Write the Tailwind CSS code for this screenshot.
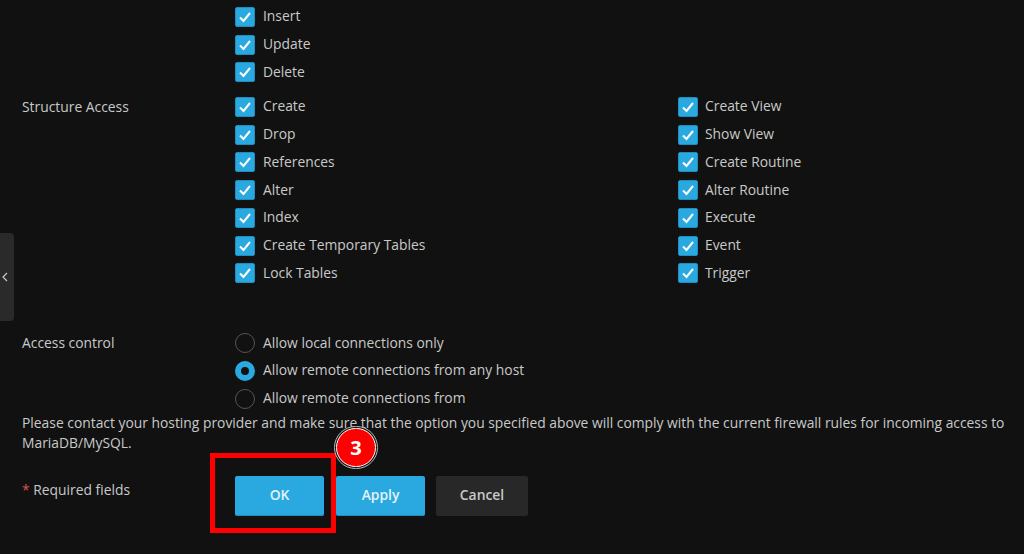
<!DOCTYPE html>
<html lang="en">
<head>
    <meta charset="UTF-8">
    <title>Database user access</title>
    <script src="https://cdn.jsdelivr.net/npm/@tailwindcss/browser@4"></script>
</head>
<body class="bg-[#111111] h-[554px] w-[1024px] overflow-hidden relative font-['Open_Sans',sans-serif] text-[13.85px] text-[#c9c9c9]">

    <!-- sidebar toggle -->
    <div class="absolute left-0 top-[233px] w-[14px] h-[88px] bg-[#2a2a2a] rounded-r flex items-center pl-[2px]">
        <svg width="6" height="10" viewBox="0 0 6 10" fill="none" stroke="#c8c8c8" stroke-width="1.2"><path d="M5 1 1 5l4 4"/></svg>
    </div>

    <main class="pl-[22px] pt-[3px]">
        <!-- data access, end of the list -->
        <div class="pl-[213px] flex flex-col">
            <label class="h-[27.75px] flex items-center gap-2"><span class="w-5 h-5 rounded-[2px] bg-[#29a9e0] border border-[#1f8dbd] flex items-center justify-center"><svg width="14" height="14" viewBox="0 0 14 14" fill="none" stroke="#fff" stroke-width="2"><path d="M2 7.5 5.5 11 12 3"/></svg></span>Insert</label>
            <label class="h-[27.75px] flex items-center gap-2"><span class="w-5 h-5 rounded-[2px] bg-[#29a9e0] border border-[#1f8dbd] flex items-center justify-center"><svg width="14" height="14" viewBox="0 0 14 14" fill="none" stroke="#fff" stroke-width="2"><path d="M2 7.5 5.5 11 12 3"/></svg></span>Update</label>
            <label class="h-[27.75px] flex items-center gap-2"><span class="w-5 h-5 rounded-[2px] bg-[#29a9e0] border border-[#1f8dbd] flex items-center justify-center"><svg width="14" height="14" viewBox="0 0 14 14" fill="none" stroke="#fff" stroke-width="2"><path d="M2 7.5 5.5 11 12 3"/></svg></span>Delete</label>
        </div>

        <!-- structure access -->
        <div class="flex mt-[6.75px]">
            <div class="w-[213px] h-[29px] flex items-center">Structure Access</div>
            <div class="w-[443px] flex flex-col">
                <label class="h-[27.75px] flex items-center gap-2"><span class="w-5 h-5 rounded-[2px] bg-[#29a9e0] border border-[#1f8dbd] flex items-center justify-center"><svg width="14" height="14" viewBox="0 0 14 14" fill="none" stroke="#fff" stroke-width="2"><path d="M2 7.5 5.5 11 12 3"/></svg></span>Create</label>
                <label class="h-[27.75px] flex items-center gap-2"><span class="w-5 h-5 rounded-[2px] bg-[#29a9e0] border border-[#1f8dbd] flex items-center justify-center"><svg width="14" height="14" viewBox="0 0 14 14" fill="none" stroke="#fff" stroke-width="2"><path d="M2 7.5 5.5 11 12 3"/></svg></span>Drop</label>
                <label class="h-[27.75px] flex items-center gap-2"><span class="w-5 h-5 rounded-[2px] bg-[#29a9e0] border border-[#1f8dbd] flex items-center justify-center"><svg width="14" height="14" viewBox="0 0 14 14" fill="none" stroke="#fff" stroke-width="2"><path d="M2 7.5 5.5 11 12 3"/></svg></span>References</label>
                <label class="h-[27.75px] flex items-center gap-2"><span class="w-5 h-5 rounded-[2px] bg-[#29a9e0] border border-[#1f8dbd] flex items-center justify-center"><svg width="14" height="14" viewBox="0 0 14 14" fill="none" stroke="#fff" stroke-width="2"><path d="M2 7.5 5.5 11 12 3"/></svg></span>Alter</label>
                <label class="h-[27.75px] flex items-center gap-2"><span class="w-5 h-5 rounded-[2px] bg-[#29a9e0] border border-[#1f8dbd] flex items-center justify-center"><svg width="14" height="14" viewBox="0 0 14 14" fill="none" stroke="#fff" stroke-width="2"><path d="M2 7.5 5.5 11 12 3"/></svg></span>Index</label>
                <label class="h-[27.75px] flex items-center gap-2"><span class="w-5 h-5 rounded-[2px] bg-[#29a9e0] border border-[#1f8dbd] flex items-center justify-center"><svg width="14" height="14" viewBox="0 0 14 14" fill="none" stroke="#fff" stroke-width="2"><path d="M2 7.5 5.5 11 12 3"/></svg></span>Create Temporary Tables</label>
                <label class="h-[27.75px] flex items-center gap-2"><span class="w-5 h-5 rounded-[2px] bg-[#29a9e0] border border-[#1f8dbd] flex items-center justify-center"><svg width="14" height="14" viewBox="0 0 14 14" fill="none" stroke="#fff" stroke-width="2"><path d="M2 7.5 5.5 11 12 3"/></svg></span>Lock Tables</label>
            </div>
            <div class="flex flex-col">
                <label class="h-[27.75px] flex items-center gap-[7px]"><span class="w-5 h-5 rounded-[2px] bg-[#29a9e0] border border-[#1f8dbd] flex items-center justify-center"><svg width="14" height="14" viewBox="0 0 14 14" fill="none" stroke="#fff" stroke-width="2"><path d="M2 7.5 5.5 11 12 3"/></svg></span>Create View</label>
                <label class="h-[27.75px] flex items-center gap-[7px]"><span class="w-5 h-5 rounded-[2px] bg-[#29a9e0] border border-[#1f8dbd] flex items-center justify-center"><svg width="14" height="14" viewBox="0 0 14 14" fill="none" stroke="#fff" stroke-width="2"><path d="M2 7.5 5.5 11 12 3"/></svg></span>Show View</label>
                <label class="h-[27.75px] flex items-center gap-[7px]"><span class="w-5 h-5 rounded-[2px] bg-[#29a9e0] border border-[#1f8dbd] flex items-center justify-center"><svg width="14" height="14" viewBox="0 0 14 14" fill="none" stroke="#fff" stroke-width="2"><path d="M2 7.5 5.5 11 12 3"/></svg></span>Create Routine</label>
                <label class="h-[27.75px] flex items-center gap-[7px]"><span class="w-5 h-5 rounded-[2px] bg-[#29a9e0] border border-[#1f8dbd] flex items-center justify-center"><svg width="14" height="14" viewBox="0 0 14 14" fill="none" stroke="#fff" stroke-width="2"><path d="M2 7.5 5.5 11 12 3"/></svg></span>Alter Routine</label>
                <label class="h-[27.75px] flex items-center gap-[7px]"><span class="w-5 h-5 rounded-[2px] bg-[#29a9e0] border border-[#1f8dbd] flex items-center justify-center"><svg width="14" height="14" viewBox="0 0 14 14" fill="none" stroke="#fff" stroke-width="2"><path d="M2 7.5 5.5 11 12 3"/></svg></span>Execute</label>
                <label class="h-[27.75px] flex items-center gap-[7px]"><span class="w-5 h-5 rounded-[2px] bg-[#29a9e0] border border-[#1f8dbd] flex items-center justify-center"><svg width="14" height="14" viewBox="0 0 14 14" fill="none" stroke="#fff" stroke-width="2"><path d="M2 7.5 5.5 11 12 3"/></svg></span>Event</label>
                <label class="h-[27.75px] flex items-center gap-[7px]"><span class="w-5 h-5 rounded-[2px] bg-[#29a9e0] border border-[#1f8dbd] flex items-center justify-center"><svg width="14" height="14" viewBox="0 0 14 14" fill="none" stroke="#fff" stroke-width="2"><path d="M2 7.5 5.5 11 12 3"/></svg></span>Trigger</label>
            </div>
        </div>

        <!-- access control -->
        <div class="flex mt-[42px]">
            <div class="w-[213px] h-[29px] flex items-center">Access control</div>
            <div class="flex flex-col">
                <label class="h-[27.75px] flex items-center gap-2"><span class="w-5 h-5 rounded-full border border-[#555555]"></span>Allow local connections only</label>
                <label class="h-[27.75px] flex items-center gap-2"><span class="w-5 h-5 rounded-full border-[6px] border-[#29a9e0] bg-[#111111]"></span>Allow remote connections from any host</label>
                <label class="h-[27.75px] flex items-center gap-2"><span class="w-5 h-5 rounded-full border border-[#555555]"></span>Allow remote connections from</label>
            </div>
        </div>

        <p class="leading-5 w-[990px]">Please contact your hosting provider and make sure that the option you specified above will comply with the current firewall rules for incoming access to MariaDB/MySQL.</p>

        <!-- form actions -->
        <div class="flex mt-[23.5px]">
            <div class="w-[213px] pt-[3.5px] leading-5"><span class="text-[#d9534f]">*</span> Required fields</div>
            <div class="flex">
                <button class="w-[89px] h-[39.5px] rounded-[2px] bg-[#29a9e0] border-b border-[#1f8dbd] text-[#e4f3fa] font-semibold">OK</button>
                <button class="w-[89px] h-[39.5px] ml-[12px] rounded-[2px] bg-[#29a9e0] border-b border-[#1f8dbd] text-[#e4f3fa] font-semibold">Apply</button>
                <button class="w-[92px] h-[39.5px] ml-[11px] rounded-[2px] bg-[#282828] text-[#c9c9c9] font-semibold">Cancel</button>
            </div>
        </div>
    </main>

    <!-- tutorial annotation -->
    <div class="absolute left-[210px] top-[453px] w-[126px] h-[80px] border-[5px] border-[#ff0000]"></div>
    <div class="absolute left-[334px] top-[426px] w-[44px] h-[43px] rounded-full border border-[#bbbbbb] p-[1px] bg-[#111111]">
        <div class="w-full h-full rounded-full bg-[#ff0000] border border-white flex items-center justify-center text-white font-bold text-[20px]">3</div>
    </div>
</body>
</html>
